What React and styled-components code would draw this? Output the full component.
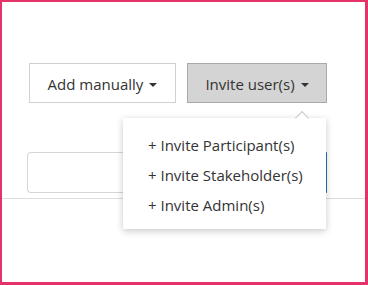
import React from "react";
import styled, { createGlobalStyle } from "styled-components";

const GlobalStyle = createGlobalStyle`
  html, body {
    margin: 0;
    padding: 0;
    background: #fff;
  }
  * {
    box-sizing: border-box;
  }
`;

const Frame = styled.div`
  width: 368px;
  height: 285px;
  border: 2px solid #e5336a;
  border-right-width: 3px;
  border-bottom-width: 3px;
  background: #fff;
  font-family: "Open Sans", "Noto Sans", sans-serif;
  color: #333;
  overflow: hidden;
`;

const Toolbar = styled.div`
  display: flex;
  gap: 11px;
  padding: 61px 0 0 27px;
`;

const DropWrap = styled.div`
  position: relative;
`;

const Button = styled.button`
  display: flex;
  align-items: center;
  justify-content: center;
  gap: 6px;
  width: ${(p) => p.$width}px;
  height: 40px;
  border: 1px solid ${(p) => (p.$active ? "#a9a9a9" : "#d0d0d0")};
  background: ${(p) => (p.$active ? "#d4d4d4" : "#fff")};
  color: #333;
  font-family: inherit;
  font-size: 15px;
  padding: 0;
  padding-top: 1px;
`;

const Caret = styled.span`
  width: 0;
  height: 0;
  margin-top: 2px;
  border-left: 4px solid transparent;
  border-right: 4px solid transparent;
  border-top: 4px solid #333;
`;

const Menu = styled.ul`
  position: absolute;
  top: 55px;
  right: 1px;
  width: 203px;
  height: 111px;
  margin: 0;
  padding: 12px 0 0;
  list-style: none;
  background: #fff;
  box-shadow: 0 2px 7px rgba(0, 0, 0, 0.22);
  z-index: 2;

  &::before {
    content: "";
    position: absolute;
    top: -5px;
    right: 19px;
    width: 9px;
    height: 9px;
    background: #fff;
    border-top: 1px solid #c8c8c8;
    border-left: 1px solid #c8c8c8;
    transform: rotate(45deg);
  }
`;

const MenuItem = styled.li`
  height: 30px;
  line-height: 30px;
  padding-left: 25px;
  font-size: 15px;
  color: #333;
  white-space: nowrap;
`;

const SearchRow = styled.div`
  padding: 49px 0 0 25px;
`;

const Search = styled.div`
  width: 300px;
  height: 41px;
  border: 1px solid #d6d6d6;
  border-right: 2px solid #2a6fb8;
  border-radius: 4px 0 0 4px;
`;

const Divider = styled.hr`
  margin: 5px 0 0;
  border: 0;
  border-top: 1px solid #dcdcdc;
`;

const items = ["Invite Participant(s)", "Invite Stakeholder(s)", "Invite Admin(s)"];

export default function App() {
  return (
    <>
      <GlobalStyle />
      <Frame>
        <Toolbar>
          <Button $width={147}>
            Add manually <Caret />
          </Button>
          <DropWrap>
            <Button $width={140} $active>
              Invite user(s) <Caret />
            </Button>
            <Menu>
              {items.map((t) => (
                <MenuItem key={t}>+ {t}</MenuItem>
              ))}
            </Menu>
          </DropWrap>
        </Toolbar>
        <SearchRow>
          <Search />
        </SearchRow>
        <Divider />
      </Frame>
    </>
  );
}
